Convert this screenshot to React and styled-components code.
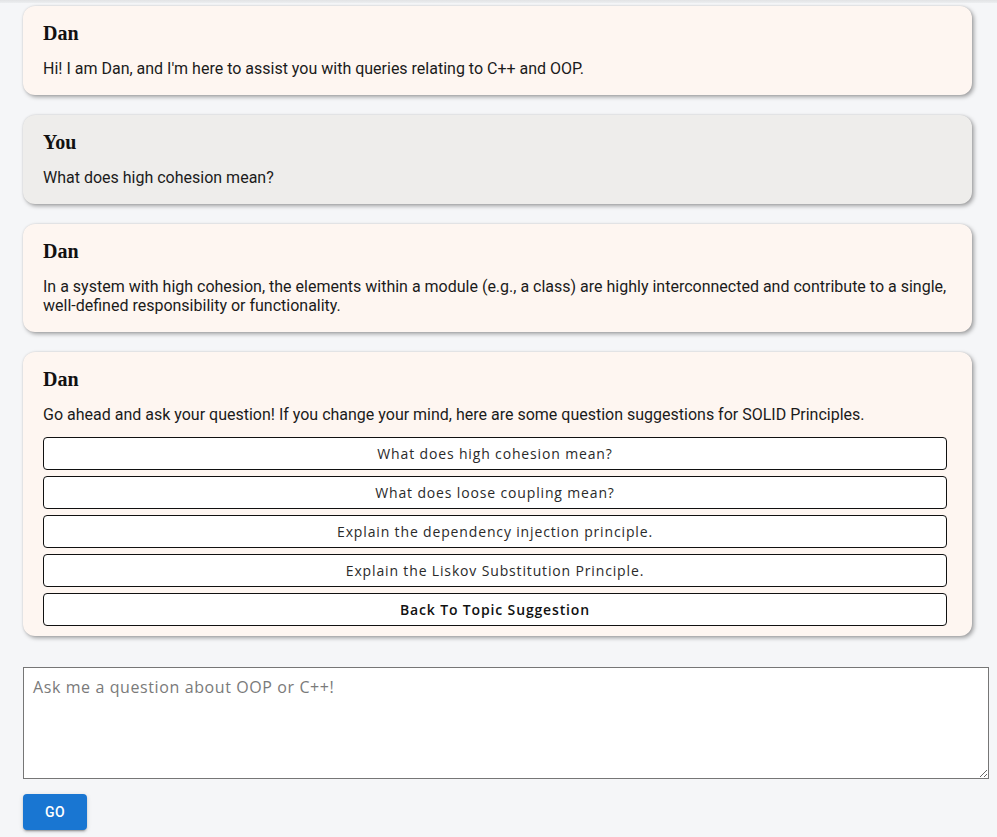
import React from 'react';
import styled, { createGlobalStyle } from 'styled-components';

const GlobalStyle = createGlobalStyle`
  body {
    margin: 0;
    background: #f5f6f8;
    font-family: Roboto, "Liberation Sans", sans-serif;
  }
`;

const TopShade = styled.div`
  height: 3px;
  background: linear-gradient(#e2e3e5, #eceef0);
`;

const Page = styled.div`
  padding: 3px 8px 7px 23px;
`;

const ChatList = styled.div`
  display: flex;
  flex-direction: column;
  gap: 20px;
  margin-right: 17px;
`;

const Bubble = styled.div`
  background: ${(p) => (p.$user ? '#eeedeb' : '#fef6f1')};
  border-radius: 12px;
  padding: 16px 25px ${(p) => (p.$withOptions ? '10px' : '17px')} 20px;
  box-shadow: 2px 2px 4px rgba(0, 0, 0, 0.35), 0 0 2px rgba(0, 0, 0, 0.12);
`;

const Sender = styled.div`
  font-family: "Liberation Serif", serif;
  font-weight: 700;
  font-size: 20px;
  color: #111;
  margin-bottom: 14px;
`;

const Message = styled.div`
  font-size: 16px;
  line-height: 19px;
  color: #1b1b1b;
`;

const Options = styled.div`
  display: flex;
  flex-direction: column;
  gap: 6px;
  margin-top: 13px;
`;

const Option = styled.button`
  height: 33px;
  background: #fff;
  border: 1.5px solid #111;
  border-radius: 4px;
  font-family: "Open Sans", sans-serif;
  font-size: 14px;
  letter-spacing: 0.85px;
  font-weight: ${(p) => (p.$bold ? 600 : 400)};
  color: ${(p) => (p.$bold ? '#111' : '#2a2a2a')};
  cursor: pointer;
`;

const Composer = styled.div`
  margin-top: 31px;
  display: flex;
  flex-direction: column;
  align-items: flex-start;
  gap: 15px;
`;

const Input = styled.textarea`
  box-sizing: border-box;
  width: 100%;
  height: 112px;
  margin: 0;
  padding: 8px 9px;
  border: 1px solid #767676;
  border-radius: 0;
  background: #fff;
  font-family: "Open Sans", sans-serif;
  font-size: 16px;
  letter-spacing: 0.6px;
  display: block;

  &::placeholder {
    color: #7a7a7a;
  }
`;

const GoButton = styled.button`
  width: 64px;
  height: 36px;
  border: none;
  border-radius: 4px;
  background: #1976d2;
  color: #fff;
  font-family: Roboto, sans-serif;
  font-weight: 500;
  font-size: 14px;
  letter-spacing: 0.4px;
  box-shadow: 0 3px 1px -2px rgba(0, 0, 0, 0.2), 0 2px 2px rgba(0, 0, 0, 0.14),
    0 1px 5px rgba(0, 0, 0, 0.12);
  cursor: pointer;
`;

const messages = [
  { from: 'Dan', text: "Hi! I am Dan, and I'm here to assist you with queries relating to C++ and OOP." },
  { from: 'You', text: 'What does high cohesion mean?' },
  {
    from: 'Dan',
    text: 'In a system with high cohesion, the elements within a module (e.g., a class) are highly interconnected and contribute to a single, well-defined responsibility or functionality.',
  },
];

const suggestions = [
  'What does high cohesion mean?',
  'What does loose coupling mean?',
  'Explain the dependency injection principle.',
  'Explain the Liskov Substitution Principle.',
];

const App = () => (
  <>
    <GlobalStyle />
    <TopShade />
    <Page>
      <ChatList>
        {messages.map((m, i) => (
          <Bubble key={i} $user={m.from === 'You'}>
            <Sender>{m.from}</Sender>
            <Message>{m.text}</Message>
          </Bubble>
        ))}
        <Bubble $withOptions>
          <Sender>Dan</Sender>
          <Message>
            Go ahead and ask your question! If you change your mind, here are some question suggestions for SOLID Principles.
          </Message>
          <Options>
            {suggestions.map((s) => (
              <Option key={s}>{s}</Option>
            ))}
            <Option $bold>Back To Topic Suggestion</Option>
          </Options>
        </Bubble>
      </ChatList>
      <Composer>
        <Input placeholder="Ask me a question about OOP or C++!" />
        <GoButton>GO</GoButton>
      </Composer>
    </Page>
  </>
);

export default App;
